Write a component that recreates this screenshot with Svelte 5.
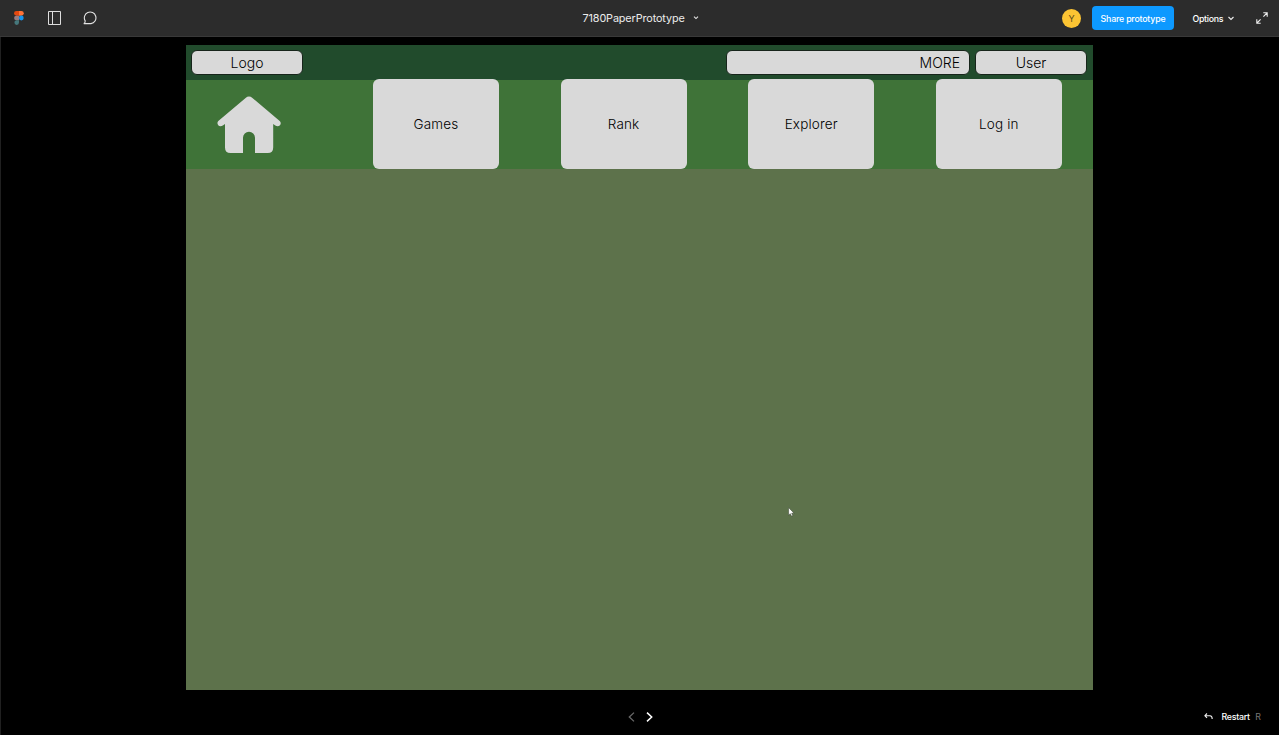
<script>
  const cards = ['Games', 'Rank', 'Explorer', 'Log in'];
</script>

<div class="app">
  <header class="topbar">
    <div class="left">
      <svg class="figma" width="10" height="14" viewBox="0 0 10 14">
        <path d="M5 0H2.4a2.3 2.3 0 0 0 0 4.7H5z" fill="#e5480f" />
        <path d="M5 0h2.4a2.3 2.3 0 0 1 0 4.7H5z" fill="#ff7237" />
        <path d="M5 4.7H2.4a2.3 2.3 0 0 0 0 4.6H5z" fill="#987b80" />
        <circle cx="7.3" cy="7" r="2.4" fill="#1595ef" />
        <path d="M5 9.3H2.4A2.3 2.3 0 1 0 5 11.6z" fill="#45777b" />
      </svg>
      <svg class="panel" width="14" height="14" viewBox="0 0 14 14" fill="none" stroke="#dedede">
        <path d="M.5.5h12v13H.5zM4.5.5v13" />
      </svg>
      <svg class="comment" width="15" height="14" viewBox="0 0 15 14" fill="none" stroke="#e3e3e3" stroke-width="1.1">
        <path d="M.8 12.6c1-.5 1.4-1.6 1.4-2.7A5.8 5.8 0 1 1 8 12.6z" />
      </svg>
    </div>
    <div class="title">
      <span>7180PaperPrototype</span>
      <svg width="6" height="4" viewBox="0 0 6 4" fill="none" stroke="#e5e5e5" stroke-width="1.1"><path d="M1 .7 3 2.600 5 .7" /></svg>
    </div>
    <div class="right">
      <div class="avatar">Y</div>
      <button class="share">Share prototype</button>
      <div class="options">
        <span>Options</span>
        <svg width="6" height="5" viewBox="0 0 6 5" fill="none" stroke="#eee" stroke-width="1.1"><path d="M.5 1 3 3.5 5.5 1" /></svg>
      </div>
      <svg class="expand" width="12" height="12" viewBox="0 0 12 12" fill="none" stroke="#eee" stroke-width="1.1">
        <path d="M7.300.8h3.900v3.900M11 1 7.400 4.600M.8 7.300v3.900h3.900M1 11l3.600-3.600" />
      </svg>
    </div>
  </header>

  <main class="stage">
    <div class="frame">
      <div class="site-head">
        <div class="pill logo">Logo</div>
        <div class="pill more">MORE</div>
        <div class="pill user">User</div>
      </div>
      <nav>
        <svg class="home" width="64" height="58" viewBox="0 0 64 58" fill="#d9d9d9">
          <path d="M28.600 1.900Q32-.8 35.400 1.900L62.700 25Q64.600 27 63 29.200Q61 31.200 58.300 29.600L56.200 27.900V51.500Q56.200 57 50.700 57H38V41.800A6 6 0 0 0 26 41.800V57H13.500Q8 57 8 51.500V27.900L5.800 29.600Q3 31.200 1.200 29.200Q-.4 27 1.300 25Z" />
        </svg>
        <div class="cards">
          {#each cards as label}
            <div class="card">{label}</div>
          {/each}
        </div>
      </nav>
    </div>
  </main>

  <footer>
    <div class="pager">
      <svg width="7" height="10" viewBox="0 0 7 10" fill="none" stroke="#696969" stroke-width="1.3"><path d="M6 .6 1.300 5 6 9.400" /></svg>
      <svg width="7" height="10" viewBox="0 0 7 10" fill="none" stroke="#fff" stroke-width="1.5"><path d="M1 .6 5.700 5 1 9.400" /></svg>
    </div>
    <div class="restart">
      <svg width="9" height="7" viewBox="0 0 9 7" fill="none" stroke="#eee" stroke-width="1.1"><path d="M3 .5.900 2.700 3 4.900M1 2.700h5Q8.200 2.700 8.200 6" /></svg>
      <span class="word">Restart</span>
      <span class="key">R</span>
    </div>
  </footer>

  <svg class="cursor" width="7" height="10" viewBox="0 0 7 10"><path d="M.6.6v7.600l1.700-1.500 1.200 2.500 1.300-.6-1.100-2.400h2.400z" fill="#fff" stroke="#333d2c" stroke-width=".5" /></svg>
</div>

<style>
  .app {
    position: relative;
    box-sizing: border-box;
    width: 1279px;
    height: 735px;
    display: flex;
    flex-direction: column;
    background: #000;
    font-family: Inter, sans-serif;
    overflow: hidden;
  }
  svg { display: block; flex: none; }
  .topbar {
    box-sizing: border-box;
    height: 37px;
    flex: none;
    display: grid;
    grid-template-columns: 1fr 118px 1fr;
    align-items: center;
    background: #2c2c2c;
    border-bottom: 1px solid #393939;
    color: #fff;
  }
  .left { display: flex; align-items: center; padding-left: 13.500px; }
  .panel { margin-left: 24.500px; }
  .comment { margin-left: 21px; }
  .title {
    display: flex;
    align-items: center;
    justify-content: space-between;
    font-size: 10.800px;
    letter-spacing: -.1px;
    color: #ececec;
    padding-left: 2px;
  }
  .right { display: flex; align-items: center; justify-content: flex-end; padding-right: 11.500px; }
  .avatar {
    width: 19px;
    height: 19px;
    border-radius: 50%;
    background: #fcc433;
    color: #5e4a18;
    font-size: 9px;
    line-height: 19px;
    text-align: center;
  }
  .share {
    width: 82px;
    height: 24px;
    margin: 0 0 0 11px;
    padding: 0;
    border: 0;
    border-radius: 4px;
    background: #0d99ff;
    color: #fff;
    font: 500 8.800px Inter, sans-serif;
    letter-spacing: -.2px;
    white-space: nowrap;
  }
  .options {
    box-sizing: border-box;
    display: flex;
    align-items: center;
    justify-content: space-between;
    width: 41.500px;
    margin-left: 18.500px;
    font-size: 8.800px;
    font-weight: 500;
    letter-spacing: -.3px;
  }
  .expand { margin-left: 21.500px; }

  .stage {
    box-sizing: border-box;
    flex: 1;
    padding: 8px 0 0 185px;
    border-left: 1px solid #202020;
  }
  .frame {
    width: 907px;
    height: 645px;
    background: #5d724b;
    color: #000;
    font-weight: 300;
  }
  .site-head {
    box-sizing: border-box;
    height: 35px;
    display: flex;
    align-items: flex-start;
    padding: 5px 6px 0 5px;
    background: #214b2c;
  }
  .pill {
    box-sizing: border-box;
    height: 25px;
    border: 1px solid #17251b;
    border-radius: 6px;
    background: #d9d9d9;
    font-size: 14px;
    line-height: 23px;
    text-align: center;
  }
  .logo, .user { width: 112px; }
  .more { width: 244px; margin-left: auto; margin-right: 5.500px; padding-right: 8.500px; text-align: right; }
  nav {
    box-sizing: border-box;
    height: 89px;
    display: flex;
    padding-left: 31px;
    background: #3f7338;
  }
  .home { margin-top: 16px; }
  .cards { display: flex; gap: 61.600px; margin: -1px 0 0 92px; }
  .card {
    width: 126px;
    height: 90px;
    border-radius: 6px;
    background: #d9d9d9;
    font-size: 13.500px;
    letter-spacing: .15px;
    line-height: 90px;
    text-align: center;
  }
  footer {
    height: 45px;
    flex: none;
    box-sizing: border-box;
    padding: 8px 18px 0 627px;
    display: flex;
    align-items: center;
    justify-content: space-between;
    border-left: 1px solid #202020;
  }
  .pager { display: flex; gap: 10.500px; }
  .restart { display: flex; align-items: center; color: #fff; font-size: 8.800px; font-weight: 500; }
  .restart svg { margin-right: 9px; }
  .word { letter-spacing: -.25px; }
  .key { color: #777; margin-left: 5.500px; font-weight: 400; }
  .cursor { position: absolute; left: 788px; top: 507px; }
</style>
